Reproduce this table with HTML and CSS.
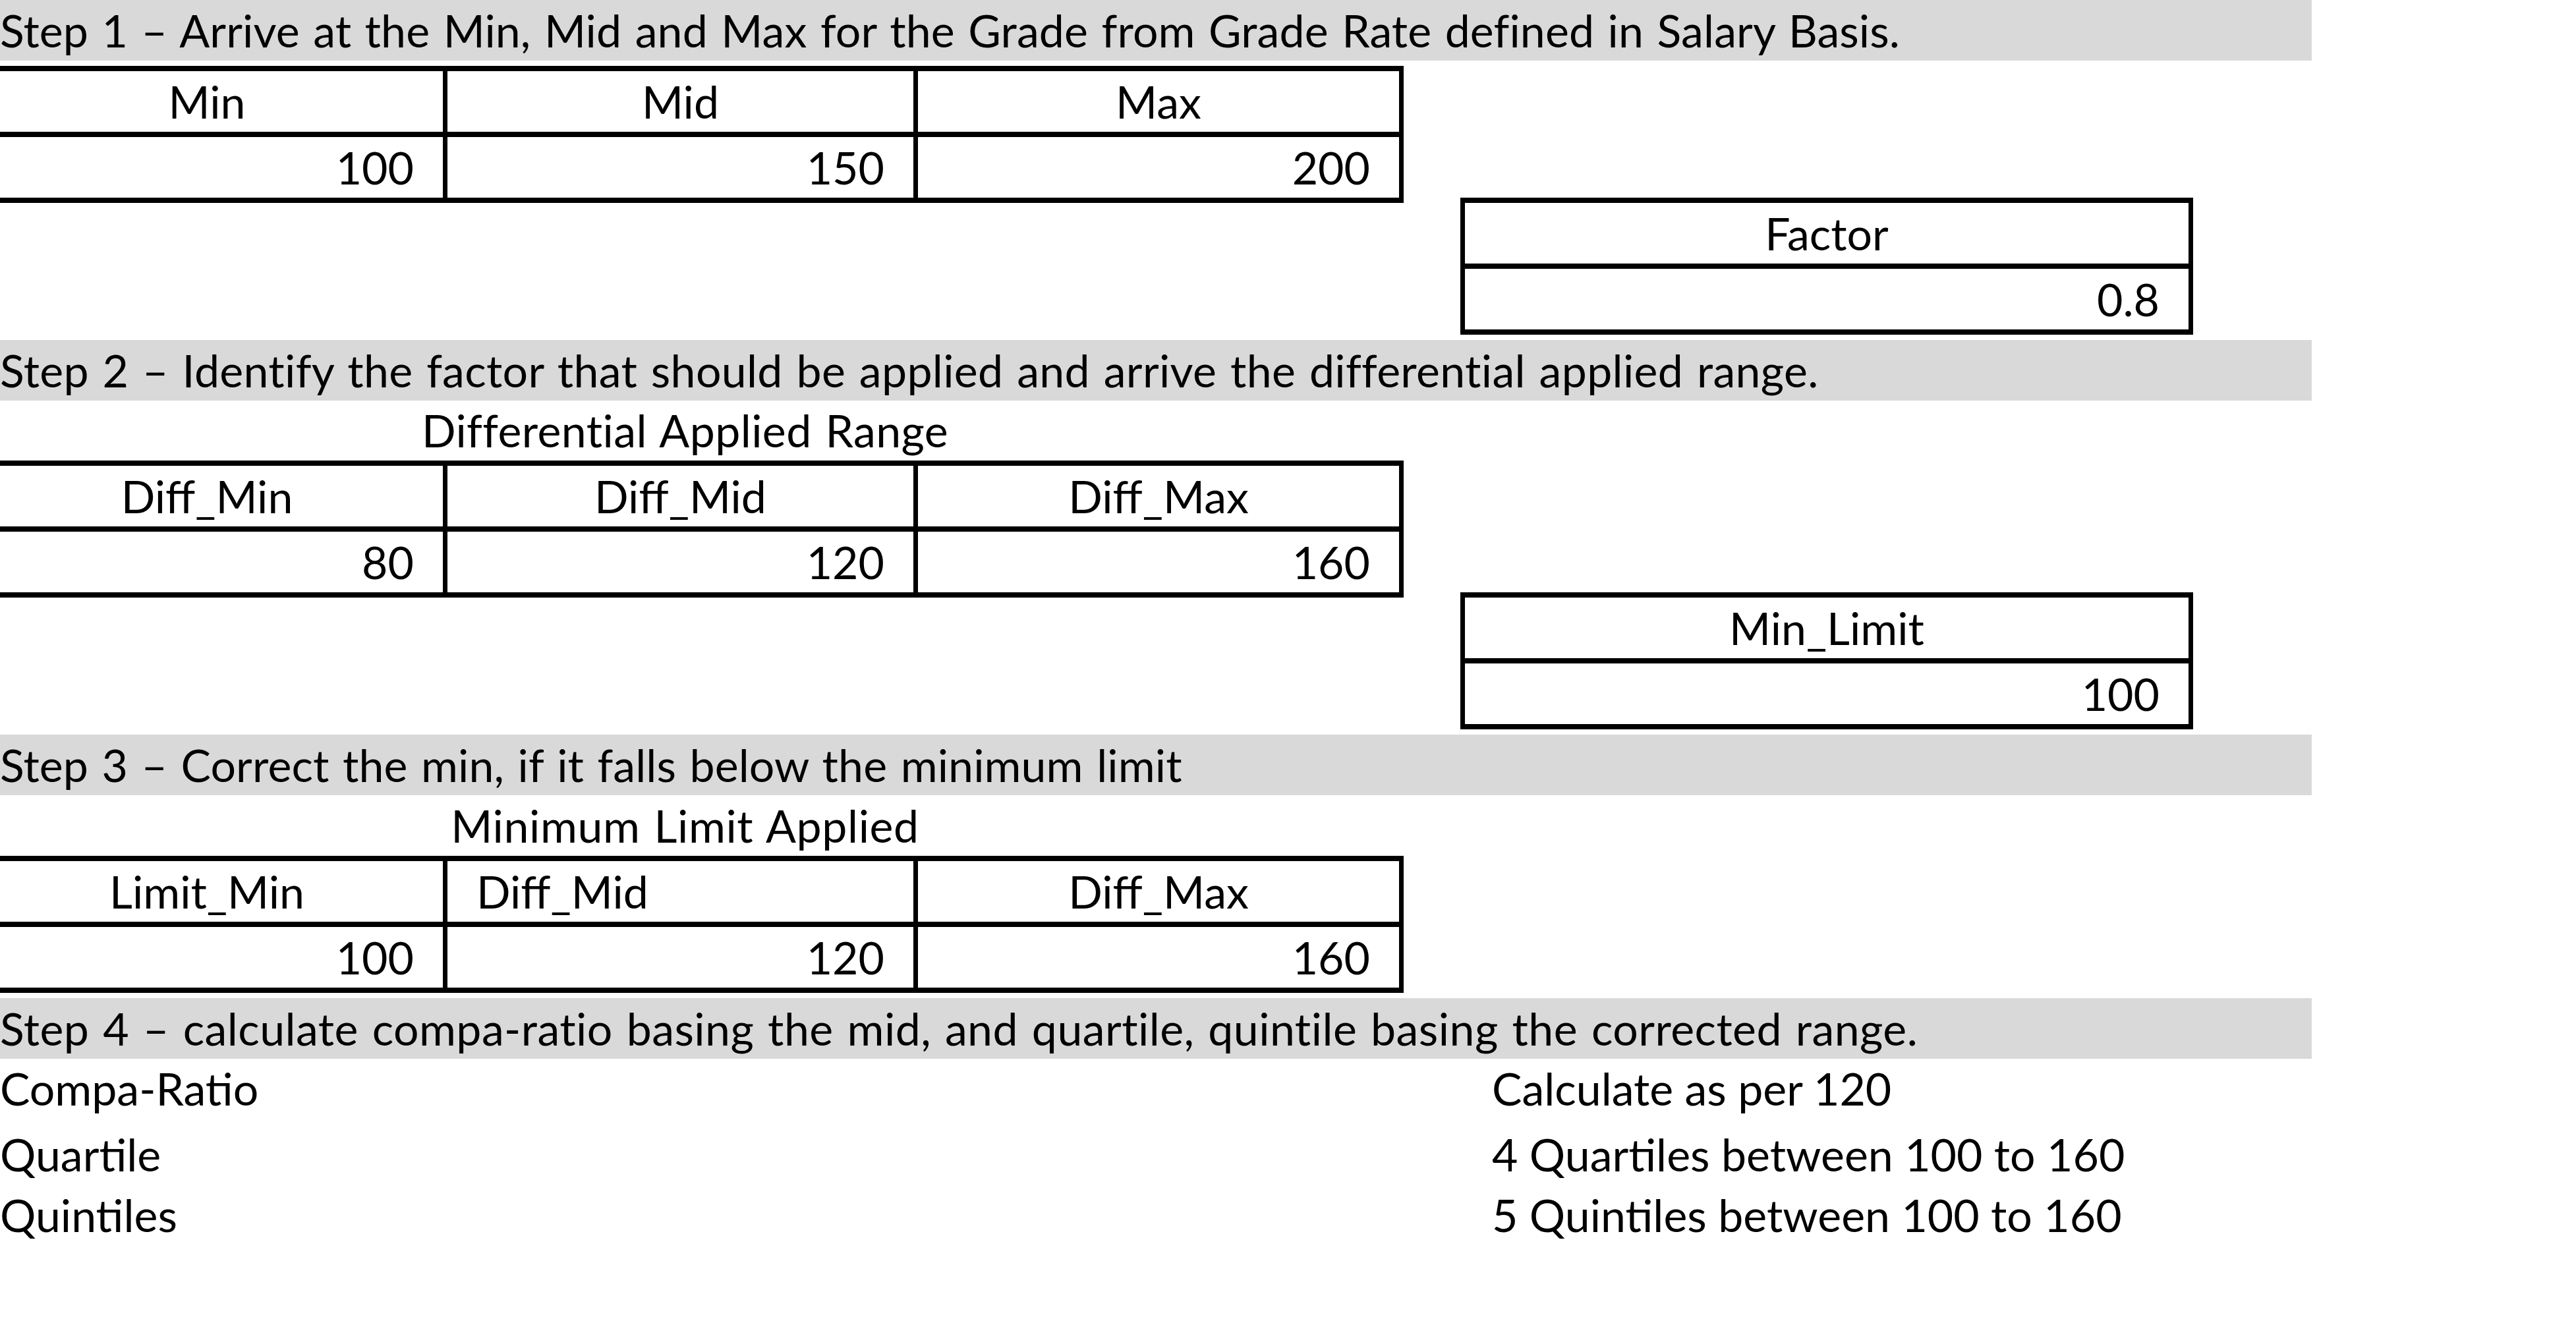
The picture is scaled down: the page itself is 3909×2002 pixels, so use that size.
FILE: index.html
```html
<!DOCTYPE html>
<html>
<head>
<meta charset="utf-8">
<link rel="stylesheet" href="styles.css">
</head>
<body>
<div class="sheet">
  <div class="band cell">Step 1 – Arrive at the Min, Mid and Max for the Grade from Grade Rate defined in Salary Basis.</div>
  <div class="sec sec-first">
    <div class="tbl">
      <div class="td cell c">Min</div>
      <div class="td cell c">Mid</div>
      <div class="td cell c">Max</div>
      <div class="td cell r">100</div>
      <div class="td cell r">150</div>
      <div class="td cell r">200</div>
    </div>
    <div class="box">
      <div class="td cell c">Factor</div>
      <div class="td cell r">0.8</div>
    </div>
  </div>
  <div class="band cell gap wide">Step 2 – Identify the factor that should be applied and arrive the differential applied range.</div>
  <div class="title cell c">Differential Applied Range</div>
  <div class="sec">
    <div class="tbl">
      <div class="td cell c">Diff_Min</div>
      <div class="td cell c">Diff_Mid</div>
      <div class="td cell c">Diff_Max</div>
      <div class="td cell r">80</div>
      <div class="td cell r">120</div>
      <div class="td cell r">160</div>
    </div>
    <div class="box">
      <div class="td cell c">Min_Limit</div>
      <div class="td cell r">100</div>
    </div>
  </div>
  <div class="band cell gap">Step 3 – Correct the min, if it falls below the minimum limit</div>
  <div class="title cell c title-b">Minimum Limit Applied</div>
  <div class="tbl">
    <div class="td cell c">Limit_Min</div>
    <div class="td cell l">Diff_Mid</div>
    <div class="td cell c">Diff_Max</div>
    <div class="td cell r">100</div>
    <div class="td cell r">120</div>
    <div class="td cell r">160</div>
  </div>
  <div class="band cell gap wider">Step 4 – calculate compa-ratio basing the mid, and quartile, quintile basing the corrected range.</div>
  <div class="row row1">
    <div class="cell k">Compa-Ratio</div>
    <div class="cell v">Calculate as per 120</div>
  </div>
  <div class="row row2">
    <div class="cell k">Quartile</div>
    <div class="cell v">4 Quartiles between 100 to 160</div>
  </div>
  <div class="row row3">
    <div class="cell k">Quintiles</div>
    <div class="cell v">5 Quintiles between 100 to 160</div>
  </div>
</div>
</body>
</html>
```
FILE: styles.css
```css
html, body {
  margin: 0;
  padding: 0;
  background: #fff;
}
body {
  font-family: Lato, "Liberation Sans", sans-serif;
  font-size: 68px;
  color: #000;
}
.sheet {
  margin-left: -51px;
  width: 3559px;
}
.cell {
  display: flex;
  align-items: flex-end;
  line-height: 68px;
  padding-bottom: 12px;
  box-sizing: border-box;
  white-space: nowrap;
}
.band {
  height: 92px;
  background: #d9d9d9;
  padding-left: 51px;
  word-spacing: 3px;
  letter-spacing: 0.1px;
}
.band.wide {
  letter-spacing: 0.32px;
}
.band.wider {
  letter-spacing: 0.44px;
}
.band.gap {
  margin-top: 8px;
}
.sec {
  display: flex;
  align-items: flex-start;
}
.sec-first {
  margin-top: 8px;
}
.tbl {
  display: grid;
  grid-template-columns: 716px 707px 730px;
  grid-auto-rows: 92px;
  gap: 8px 7px;
  padding: 8px 7px;
  background: #000;
  width: max-content;
}
.box {
  display: grid;
  grid-template-columns: 1098px;
  grid-auto-rows: 92px;
  gap: 8px;
  padding: 8px 7px;
  background: #000;
  margin-left: 86px;
  margin-top: 200px;
}
.td {
  background: #fff;
  padding-left: 44px;
  padding-right: 44px;
}
.c { justify-content: center; }
.r { justify-content: flex-end; }
.l { justify-content: flex-start; }
.title {
  width: 2181px;
  height: 91px;
  word-spacing: 3px;
  letter-spacing: 0.4px;
}
.title-b {
  height: 92px;
  letter-spacing: 0.6px;
}
.row {
  display: grid;
  grid-template-columns: 2274px 1fr;
}
.row1 { height: 91px; }
.row2 { height: 100px; }
.row3 { height: 92px; }
.k { padding-left: 51px; }
.v { padding-left: 41px; }
```
